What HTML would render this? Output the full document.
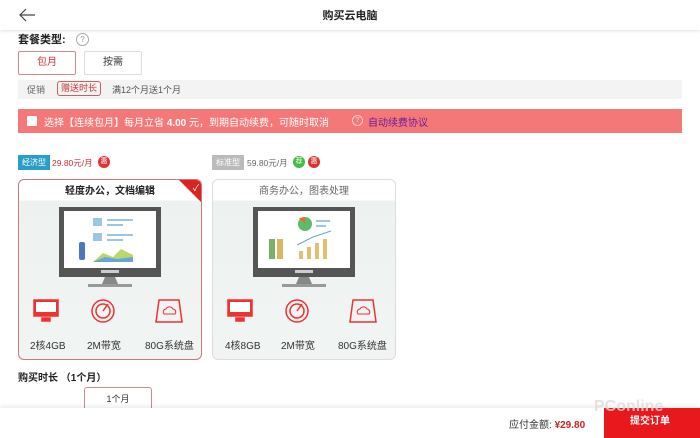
<!DOCTYPE html>
<html><head><meta charset="utf-8"><style>
*{margin:0;padding:0;box-sizing:border-box}
body{width:700px;height:438px;overflow:hidden;background:#fff;font-family:"Liberation Sans","Noto Sans CJK SC",sans-serif;position:relative;color:#333}
.a{position:absolute}
.card{position:absolute;top:179px;width:184px;height:181px;border-radius:6px;background:linear-gradient(#fff 0,#fff 20px,#edf2f0 21px,#f1f4f2 100%);overflow:hidden}
.ct{position:absolute;top:2px;left:0;width:100%;text-align:center;font-size:10px}
.spec{position:absolute;top:337px;font-size:10px;color:#333}
</style></head><body>
<div class="a" style="left:0;top:0;width:700px;height:30px;background:#fff;box-shadow:0 1px 3px rgba(0,0,0,.12)"></div>
<svg class="a" style="left:18px;top:7px" width="18" height="16"><path d="M17 8H2M8 2L2 8l6 6" stroke="#444" stroke-width="1.2" fill="none"/></svg>
<div class="a" style="left:0;width:700px;top:7px;text-align:center;font-size:11px;font-weight:bold;color:#222">购买云电脑</div>
<div class="a" style="left:18px;top:31px;font-size:11px;font-weight:bold;color:#222">套餐类型:</div>
<div class="a" style="left:76px;top:33px;width:13px;height:13px;border:1px solid #aaa;border-radius:50%;font-size:8px;color:#999;text-align:center;line-height:11px">?</div>
<div class="a" style="left:18px;top:51px;width:58px;height:24px;border:1px solid #c98b8b;border-radius:2px;font-size:10px;color:#c33;text-align:center;line-height:22px">包月</div>
<div class="a" style="left:84px;top:51px;width:58px;height:24px;border:1px solid #ddd;border-radius:2px;font-size:10px;color:#333;text-align:center;line-height:22px">按需</div>
<div class="a" style="left:18px;top:80px;width:664px;height:19px;background:#f3f3f3"></div>
<div class="a" style="left:27px;top:83px;font-size:9px;color:#666">促销</div>
<div class="a" style="left:57px;top:81px;height:15px;padding:0 3px;border:1px solid #b66;border-radius:3px;font-size:9px;color:#c33;line-height:13px">赠送时长</div>
<div class="a" style="left:112px;top:83px;font-size:9px;color:#555">满12个月送1个月</div>
<div class="a" style="left:18px;top:109px;width:664px;height:24px;background:#f47878"></div>
<div class="a" style="left:27px;top:116px;width:10px;height:10px;background:#fff;border-radius:1px"></div>
<div class="a" style="left:44px;top:114px;font-size:10px;color:#fff">选择【连续包月】每月立省 <b>4.00</b> 元，到期自动续费，可随时取消</div>
<div class="a" style="left:352px;top:115px;width:11px;height:11px;border:1px solid #fcc;border-radius:50%;font-size:7px;color:#fcc;text-align:center;line-height:9px">?</div>
<div class="a" style="left:368px;top:114px;font-size:10px;color:#6a1b9a">自动续费协议</div>

<div class="a" style="left:18px;top:155px;width:32px;height:15px;background:#2a9ec8;color:#fff;font-size:8px;text-align:center;line-height:15px">经济型</div>
<div class="a" style="left:52px;top:157px;font-size:8.5px;color:#c33">29.80元/月</div>
<div class="a" style="left:98px;top:156px;width:12px;height:12px;border-radius:50%;background:#d33;color:#fff;font-size:7px;text-align:center;line-height:12px">惠</div>
<div class="a" style="left:212px;top:155px;width:32px;height:15px;background:#bbb;color:#fff;font-size:8px;text-align:center;line-height:15px">标准型</div>
<div class="a" style="left:247px;top:157px;font-size:8.5px;color:#666">59.80元/月</div>
<div class="a" style="left:293px;top:156px;width:12px;height:12px;border-radius:50%;background:#4b4;color:#fff;font-size:7px;text-align:center;line-height:12px">荐</div>
<div class="a" style="left:308px;top:156px;width:12px;height:12px;border-radius:50%;background:#d33;color:#fff;font-size:7px;text-align:center;line-height:12px">惠</div>

<div class="card" style="left:18px;border:1px solid #c67a7a">
<div class="ct" style="font-weight:bold;color:#222">轻度办公，文档编辑</div>
<div class="a" style="right:0;top:0;width:0;height:0;border-top:22px solid #d22;border-left:22px solid transparent"></div>
<div class="a" style="right:2px;top:1px;color:#fff;font-size:9px">✓</div>
</div>
<div class="card" style="left:212px;border:1px solid #ddd">
<div class="ct" style="color:#666">商务办公，图表处理</div>
</div>

<svg class="a" style="left:59px;top:207px" width="102" height="82"><rect x="0" y="0" width="102" height="70" fill="#555"/><rect x="5" y="4" width="92" height="57" fill="#fff"/><rect x="42" y="63" width="18" height="3" fill="#ccc"/><path d="M46 70h10l3 7H43z" fill="#888"/><rect x="29" y="77" width="44" height="3" fill="#999"/>
<rect x="34" y="11" width="9" height="8" fill="#9cc7e4"/><rect x="48" y="12" width="26" height="2" fill="#9cc7e4"/><rect x="48" y="17" width="16" height="2" fill="#9cc7e4"/><rect x="34" y="26" width="9" height="8" fill="#9cc7e4"/><rect x="48" y="27" width="26" height="2" fill="#9cc7e4"/><rect x="48" y="32" width="16" height="2" fill="#9cc7e4"/>
<path d="M34 55 L44 46 L54 50 L62 42 L74 48 V55Z" fill="#b8d86a"/><path d="M34 55 L46 50 L58 52 L74 50 V55Z" fill="#6aa4d8"/><rect x="20" y="35" width="6" height="18" rx="2" fill="#4a78c0"/></svg>
<svg class="a" style="left:253px;top:207px" width="102" height="82"><rect x="0" y="0" width="102" height="70" fill="#555"/><rect x="5" y="4" width="92" height="57" fill="#fff"/><rect x="42" y="63" width="18" height="3" fill="#ccc"/><path d="M46 70h10l3 7H43z" fill="#888"/><rect x="29" y="77" width="44" height="3" fill="#999"/>
<circle cx="52" cy="17" r="7" fill="#5dbb6a"/><path d="M52 17 L46 11 L52 10Z" fill="#e07030"/><rect x="63" y="13" width="14" height="2" fill="#9cc7e4"/><rect x="63" y="18" width="10" height="2" fill="#9cc7e4"/>
<rect x="16" y="32" width="6" height="20" fill="#7ab06a"/><rect x="24" y="32" width="6" height="20" fill="#d8b860"/><path d="M44 38 L60 30 L78 24" stroke="#6aa4d8" fill="none"/><rect x="46" y="44" width="4" height="8" fill="#e0c070"/><rect x="54" y="40" width="4" height="12" fill="#e0c070"/><rect x="62" y="36" width="4" height="16" fill="#e0c070"/><rect x="70" y="32" width="4" height="20" fill="#e0c070"/></svg>

<svg class="a" style="left:33px;top:298px" width="160" height="28">
<g fill="none" stroke="#e33" stroke-width="1.5"><rect x="1" y="2" width="24" height="16" fill="#e33"/><rect x="3" y="4" width="20" height="10" fill="#fff" stroke="none"/><rect x="9" y="20" width="8" height="3" fill="#e33"/>
<circle cx="70" cy="13" r="11"/><circle cx="70" cy="13" r="7"/><path d="M70 13 L75 6"/>
<path d="M126 2h20l3 22h-26z"/><path d="M131 16h11a3 3 0 0 0 -2-5 4 4 0 0 0 -7 0 3 3 0 0 0 -2 5z" stroke-width="1"/></g></svg>
<svg class="a" style="left:227px;top:298px" width="160" height="28">
<g fill="none" stroke="#e33" stroke-width="1.5"><rect x="1" y="2" width="24" height="16" fill="#e33"/><rect x="3" y="4" width="20" height="10" fill="#fff" stroke="none"/><rect x="9" y="20" width="8" height="3" fill="#e33"/>
<circle cx="70" cy="13" r="11"/><circle cx="70" cy="13" r="7"/><path d="M70 13 L75 6"/>
<path d="M126 2h20l3 22h-26z"/><path d="M131 16h11a3 3 0 0 0 -2-5 4 4 0 0 0 -7 0 3 3 0 0 0 -2 5z" stroke-width="1"/></g></svg>
<div class="spec" style="left:30px">2核4GB</div><div class="spec" style="left:87px">2M带宽</div><div class="spec" style="left:145px">80G系统盘</div>
<div class="spec" style="left:225px">4核8GB</div><div class="spec" style="left:281px">2M带宽</div><div class="spec" style="left:338px">80G系统盘</div>

<div class="a" style="left:18px;top:369px;font-size:10px;font-weight:bold;color:#222">购买时长 （1个月）</div>
<div class="a" style="left:84px;top:387px;width:68px;height:26px;border:1px solid #c98b8b;border-radius:3px;font-size:9px;text-align:center;line-height:22px;color:#333">1个月</div>
<div class="a" style="left:0;top:408px;width:700px;height:30px;background:#fff;box-shadow:0 -2px 4px rgba(0,0,0,.08)"></div>
<div class="a" style="left:509px;top:416px;font-size:10px;color:#333">应付金额: <b style="color:#c22">¥29.80</b></div>
<div class="a" style="left:604px;top:408px;width:96px;height:30px;background:#e8181c;color:#fff;font-size:10px;font-weight:bold;line-height:28px;padding-left:26px">提交订单</div>
<div class="a" style="left:594px;top:398px;font-size:16px;color:rgba(220,220,220,.8);font-weight:bold">PConline</div>
</body></html>
